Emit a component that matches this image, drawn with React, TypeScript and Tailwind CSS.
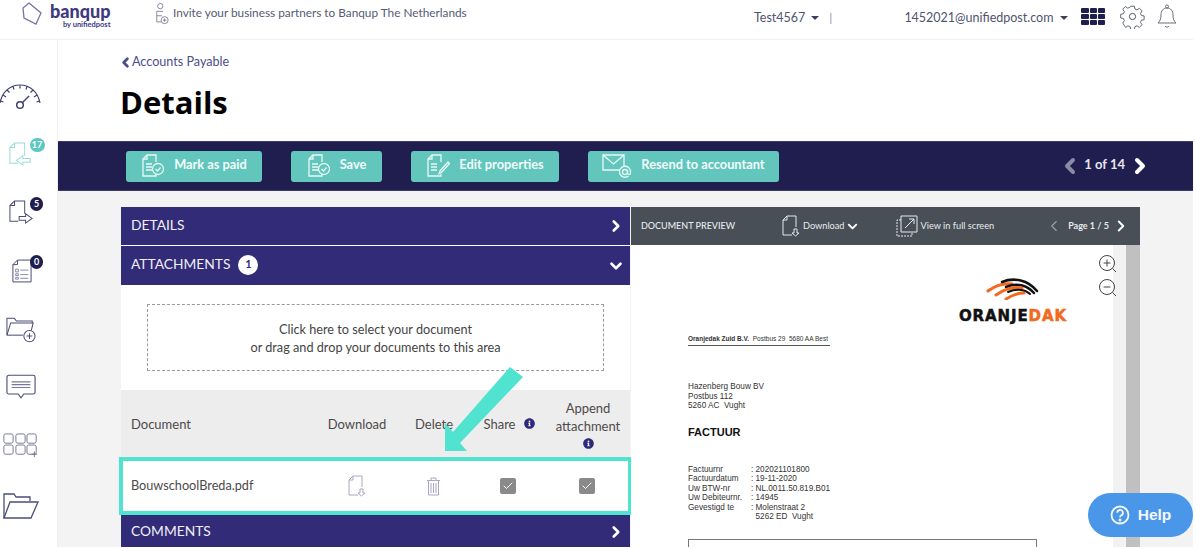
import React from 'react';
import { ChevronDown, ChevronLeft, ChevronRight, Check } from 'lucide-react';
import { FaInfoCircle } from 'react-icons/fa';

const navy = '#4b4d78';

const Gauge = () => (
  <svg width="42" height="28" viewBox="0 0 42 28" fill="none" stroke="#3f4270" strokeWidth="1.2">
    <path d="M1 21C3 10 11 3 21 3s18 7 20 18" />
    <path d="M1.5 19l3 1M4 13l3 2M8 8l2.5 2.500M14 4.500l1 3M21 3.500v3M28 4.500l-1 3M34 8l-2.500 2.500M38 13l-3 2M40.500 19l-3 1" />
    <circle cx="21" cy="23" r="3.300" strokeWidth="1.500" />
    <path d="M23 21l7-7" strokeWidth="1.500" />
  </svg>
);

const DocArrow = ({ color, out }: { color: string; out?: boolean }) => (
  <svg width="24" height="26" viewBox="0 0 26 26" fill="none" stroke={color} strokeWidth="1.1">
    <path d="M17 15V1H6L1 6v17h9" />
    <path d="M6 1v5H1" />
    {out ? (
      <path d="M11 18h7v-3l7 5-7 5v-3h-7z" />
    ) : (
      <path d="M23 18h-8v-3l-7 5 7 5v-3h8z" />
    )}
  </svg>
);

const ListDoc = () => (
  <svg width="20" height="24" viewBox="0 0 22 26" fill="none" stroke={navy} strokeWidth="1.100">
    <path d="M21 25H1V6l5-5h15z" />
    <path d="M6 1v5H1" />
    <path d="M4 11h3v3H4zM4 16h3v2H4zM4 20h3v2H4zM9 12h9M9 17h9M9 21h9" stroke="#8b8ca8" />
  </svg>
);

const FolderPlus = () => (
  <svg width="30" height="26" viewBox="0 0 32 27" fill="none" stroke={navy} strokeWidth="1.100">
    <path d="M1 19V1h8l2 3h17v2" />
    <path d="M1 19L5 6h24l-2 8" />
    <path d="M1 19h17" />
    <circle cx="25" cy="20" r="6" />
    <path d="M25 17v6M22 20h6" />
  </svg>
);

const Speech = () => (
  <svg width="30" height="25" viewBox="0 0 32 26" fill="none" stroke={navy} strokeWidth="1.200">
    <path d="M3 1h26a2 2 0 0 1 2 2v16a2 2 0 0 1-2 2H19l-3 4-3-4H3a2 2 0 0 1-2-2V3a2 2 0 0 1 2-2z" />
    <path d="M6 8h20M6 11h20M6 14h20" stroke="#77789a" />
  </svg>
);

const AppsPlus = () => (
  <svg width="37" height="24" viewBox="0 0 38 26" fill="none" stroke="#6f7090" strokeWidth="1">
    {[1, 14, 26].map((x) =>
      [1, 13].map((y) => <rect key={`${x}-${y}`} x={x} y={y} width="10" height="10" rx="2" />)
    )}
    <path d="M34 20v6M31 23h6" />
  </svg>
);

const Folder = () => (
  <svg width="36" height="26" viewBox="0 0 36 26" fill="none" stroke={navy} strokeWidth="1.300">
    <path d="M1 25V1h10l2 3h14v4" />
    <path d="M1 25L7 9h28l-7 16z" />
  </svg>
);

const PageDown = ({ color, w = 18, h = 22 }: { color: string; w?: number; h?: number }) => (
  <svg width={w} height={h} viewBox="0 0 18 22" fill="none" stroke={color} strokeWidth="1">
    <path d="M14 12V1H5L1 5v15h9" />
    <path d="M5 1v4H1" />
    <path d="M12 14v4h-2l3.500 3 3.500-3h-2v-4z" />
  </svg>
);

const Trash = () => (
  <svg width="15" height="19" viewBox="0 0 15 19" fill="none" stroke="#a9a6c6" strokeWidth="1">
    <path d="M1 3.500h13M5 3.500V1h5v2.500M2.500 3.500V18h10V3.500M5 6v10M7.500 6v10M10 6v10" />
  </svg>
);

const DocCheck = ({ pen }: { pen?: boolean }) => (
  <svg width="24" height="24" viewBox="0 0 24 24" fill="none" stroke="#eaf8f6" strokeWidth="1.300">
    <path d="M15 8V1H6L2 5v17h13v-2" />
    <path d="M6 1v4H2M5 10h6M5 13h6M5 16h6" />
    {pen ? (
      <path d="M14 17l8-9 1.500 1.500-8 9-2.500 1z" />
    ) : (
      <>
        <circle cx="17" cy="15" r="5.500" />
        <path d="M14.500 15l2 2 3-3.500" />
      </>
    )}
  </svg>
);

const MailAt = () => (
  <svg width="30" height="24" viewBox="0 0 30 24" fill="none" stroke="#eaf8f6" strokeWidth="1.300">
    <path d="M17 16H1V1h21v11" />
    <path d="M1 1l10.500 9L22 1" />
    <circle cx="23" cy="18" r="2.500" />
    <path d="M25.500 16v3a1.500 1.500 0 0 0 3 0v-1a5.500 5.500 0 1 0-2 4" />
  </svg>
);

const Gear = () => (
  <svg width="25" height="25" viewBox="0 0 24 24" fill="none" stroke="#4a4f5c" strokeWidth="0.900">
    <path d="M10 1h4l.6 3 2.200.9 2.600-1.700 2.800 2.800-1.700 2.600.9 2.200 3 .6v4l-3 .6-.9 2.200 1.700 2.600-2.800 2.800-2.600-1.700-2.200.9-.6 3h-4l-.6-3-2.200-.9-2.600 1.700L1.600 19l1.700-2.600-.9-2.200-3-.6v-4l3-.6.900-2.200L1.600 4.200 4.400 1.400 7 3.100l2.200-.9z" transform="translate(1.200 1.200) scale(.9)" />
    <circle cx="12" cy="12" r="3" />
  </svg>
);

const Bell = () => (
  <svg width="20" height="25" viewBox="0 0 20 25" fill="none" stroke="#5a5f6a" strokeWidth="0.900">
    <path d="M1 19c2-2 3-4 3-8s2-7 6-7 6 3 6 7 1 6 3 8z" />
    <circle cx="10" cy="2.500" r="1.500" />
    <path d="M8 22c1 1.500 3 1.500 4 0" />
  </svg>
);

const Badge = ({ value, teal }: { value: string; teal?: boolean }) => (
  <span className={`absolute flex items-center justify-center rounded-full text-[9px] font-bold text-white h-[14px] left-[31px] ${teal ? 'w-[15px] bg-[#5cc8bf] -top-[2px]' : 'w-[13px] bg-[#201d4f] -top-[1px]'}`}>
    {value}
  </span>
);

const ActionButton = ({ icon, label, width }: { icon: React.ReactNode; label: string; width: string }) => (
  <button className={`flex items-center justify-center gap-[9px] h-[31px] rounded-[3px] bg-[#62c6bd] text-[12.800px] font-bold text-[#f2fbfa] ${width}`}>
    {icon}
    <span className="mb-[2px]">{label}</span>
  </button>
);

const PanelBar = ({ children, open, height }: { children: React.ReactNode; open?: boolean; height: string }) => (
  <div className={`flex items-center justify-between pl-[10px] pr-[5px] bg-[#322b77] text-[13.800px] text-[#f0eff8] ${height}`}>
    <div className="flex items-center gap-[8px] pb-[2px]">{children}</div>
    {open ? <ChevronDown size={18} strokeWidth={3.500} color="#fff" /> : <ChevronRight size={18} strokeWidth={3.500} color="#fff" />}
  </div>
);

const Tick = () => (
  <span className="flex items-center justify-center w-[16px] h-[16px] rounded-[2px] bg-[#8a8a8a]">
    <Check size={12} strokeWidth={2} color="#fff" />
  </span>
);

export default function App() {
  return (
    <div className="relative w-[1196px] h-[549px] overflow-hidden bg-white font-['Lato','Liberation_Sans',sans-serif]">
      <div className="w-[1193px] h-[547px] flex flex-col">
        {/* top bar */}
        <header className="flex items-center h-[40px] shrink-0 border-b border-[#f0f0f0] text-[#565a76]">
          <div className="flex items-start self-start shrink-0 ml-[22px] w-[89px] pt-[2px]">
            <svg width="20" height="24" viewBox="0 0 20 24" fill="none" stroke="#7773ab" strokeWidth="1.300" className="mr-[8px]">
              <path d="M7 1l12 10-5 11L2 16 1 6z" />
            </svg>
            <div className="flex flex-col items-end shrink-0">
              <span className="text-[18px] leading-[19px] font-black text-[#3d3a80]">banqup</span>
              <span className="text-[7.500px] leading-[8px] font-bold text-[#3d3a80] whitespace-nowrap">by unifiedpost</span>
            </div>
          </div>
          <svg width="14" height="24" viewBox="0 0 16 26" fill="none" stroke="#6b6f85" strokeWidth="0.900" className="ml-[44px] mr-[4px] mb-[11px] shrink-0">
            <circle cx="6" cy="4" r="3" />
            <path d="M9 10H2v12h5M2 15h6" />
            <circle cx="11" cy="20" r="4" />
            <path d="M11 18v4M9 20h4" />
          </svg>
          <span className="w-[291px] shrink-0 whitespace-nowrap text-[11.800px] mb-[13px]">Invite your business partners to Banqup The Netherlands</span>
          <span className="ml-[290px] mb-[3px] text-[12.500px] text-[#50546e] whitespace-nowrap">Test4567</span>
          <span className="ml-[6px] mb-[3px] border-x-[4px] border-t-[4px] border-x-transparent border-t-[#3c3f5c]" />
          <span className="ml-[10px] mb-[3px] text-[12px] text-[#8a8fa0]">|</span>
          <span className="ml-[72px] mb-[3px] text-[12.500px] text-[#50546e] whitespace-nowrap">1452021@unifiedpost.com</span>
          <span className="ml-[7px] mb-[3px] border-x-[4px] border-t-[4px] border-x-transparent border-t-[#3c3f5c]" />
          <div className="ml-[13px] mb-[6px] grid grid-cols-3 gap-[1px] w-[24px] shrink-0">
            {Array.from({ length: 9 }).map((_, i) => (
              <span key={i} className="h-[5px] rounded-[1px] bg-[#201d4f]" />
            ))}
          </div>
          <span className="ml-[15px] mb-[6px] flex shrink-0"><Gear /></span>
          <span className="ml-[12px] mb-[6px] flex shrink-0"><Bell /></span>
        </header>

        <div className="flex flex-1 min-h-0">
          {/* sidebar */}
          <aside className="w-[58px] shrink-0 border-r border-[#f0f0f0] flex flex-col items-center pt-[27px]">
            <div className="h-[58px] flex items-center justify-center -ml-[17px] w-[42px]"><Gauge /></div>
            <div className="relative h-[58px] w-[44px] flex items-center justify-center -ml-[16px]"><DocArrow color="#9bdcd6" /><span className="absolute left-0 top-[15px]"><Badge value="17" teal /></span></div>
            <div className="relative h-[58px] w-[44px] flex items-center justify-center -ml-[15px]"><DocArrow color={navy} out /><span className="absolute left-0 top-[15px]"><Badge value="5" /></span></div>
            <div className="relative h-[60px] w-[44px] flex items-center justify-center -ml-[13px]"><ListDoc /><span className="absolute -left-[1px] top-[15px]"><Badge value="0" /></span></div>
            <div className="h-[58px] flex items-center justify-center w-[44px] -ml-[15px]"><FolderPlus /></div>
            <div className="h-[55px] flex items-center justify-center w-[44px] -ml-[15px]"><Speech /></div>
            <div className="h-[62px] flex items-center justify-center w-[44px] -ml-[16px]"><AppsPlus /></div>
            <div className="h-[59px] flex items-center justify-center w-[44px] -ml-[15px]"><Folder /></div>
          </aside>

          <main className="flex-1 min-w-0 flex flex-col">
            <div className="h-[101px] shrink-0 pl-[62px] pt-[14px]">
              <div className="flex items-center text-[12.600px] leading-[16px] text-[#4d4c8c]">
                <ChevronLeft size={15} strokeWidth={4.500} className="-ml-[2px] -mr-[1px]" />
                Accounts Payable
              </div>
              <h1 className="mt-[13px] text-[31px] leading-[38px] font-bold text-black font-['Open_Sans',sans-serif]">Details</h1>
            </div>

            <div className="h-[50px] shrink-0 flex items-center pl-[68px] pr-[41px] bg-[#201d4f] border-y border-[#3d3a6c]">
              <div className="flex items-center gap-[29px]">
                <ActionButton icon={<DocCheck />} label="Mark as paid" width="w-[136px]" />
                <ActionButton icon={<DocCheck />} label="Save" width="w-[91px]" />
                <ActionButton icon={<DocCheck pen />} label="Edit properties" width="w-[148px]" />
                <ActionButton icon={<MailAt />} label="Resend to accountant" width="w-[191px]" />
              </div>
              <div className="ml-auto flex items-center text-[13px] font-bold text-[#e6e6ef]">
                <ChevronLeft size={24} strokeWidth={4} color="#8b8aa5" className="mr-[2px]" />
                <span className="mb-[2px]">1 of 14</span>
                <ChevronRight size={24} strokeWidth={4} color="#fff" className="ml-[3px]" />
              </div>
            </div>

            <div className="flex-1 min-h-0 overflow-hidden bg-[#f3f3f3] flex items-start pl-[63px] pt-[16px]">
              {/* left panel */}
              <section className="w-[509px] shrink-0 bg-white">
                <PanelBar height="h-[38px] mb-[1px]">DETAILS</PanelBar>
                <PanelBar height="h-[39px]" open>
                  ATTACHMENTS
                  <span className="flex items-center justify-center w-[20px] h-[20px] rounded-full bg-white text-[11px] font-bold text-[#322b77]">1</span>
                </PanelBar>
                <div className="h-[105px] pt-[19px] pl-[26px]">
                  <div className="w-[457px] h-[67px] border border-dashed border-[#9a9a9a] flex flex-col items-center justify-center text-[12.700px] leading-[18px] text-[#444]">
                    <span>Click here to select your document</span>
                    <span>or drag and drop your documents to this area</span>
                  </div>
                </div>
                <div className="h-[67px] flex items-center bg-[#ededed] text-[13px] leading-[18px] text-[#4d4a4a]">
                  <div className="w-[197px] pl-[10px]">Document</div>
                  <div className="w-[78px] text-center">Download</div>
                  <div className="w-[76px] text-center">Delete</div>
                  <div className="w-[74px] flex items-center justify-center gap-[8px]">Share <FaInfoCircle size={11} color="#2d2a7c" /></div>
                  <div className="w-[84px] flex flex-col items-center">
                    <span>Append</span>
                    <span>attachment</span>
                    <FaInfoCircle size={11} color="#2d2a7c" className="mt-[3px]" />
                  </div>
                </div>
                <div className="-mx-[2px] w-[513px] h-[58px] flex items-center border-[4px] border-[#4fe3d0] bg-white text-[12.700px] text-[#4d4a4a]">
                  <div className="w-[196px] pl-[8px]">BouwschoolBreda.pdf</div>
                  <div className="w-[78px] flex justify-center"><PageDown color="#a8a6c2" /></div>
                  <div className="w-[76px] flex justify-center"><Trash /></div>
                  <div className="w-[74px] flex justify-center"><Tick /></div>
                  <div className="w-[83px] flex justify-center"><Tick /></div>
                </div>
                <PanelBar height="h-[34px]">COMMENTS</PanelBar>
              </section>

              {/* document preview */}
              <section className="w-[509px] shrink-0 ml-[1px] bg-[#f2f2f2]">
                <div className="h-[38px] flex items-center pl-[10px] bg-[#484f57] text-[#e8eaec]">
                  <span className="w-[141px] text-[9px] font-medium">DOCUMENT PREVIEW</span>
                  <PageDown color="#e8eaec" />
                  <span className="ml-[3px] text-[9.200px]">Download</span>
                  <ChevronDown size={15} strokeWidth={3} color="#fff" />
                  <svg width="22" height="22" viewBox="0 0 22 22" fill="none" stroke="#e8eaec" strokeWidth="1" className="ml-[36px]">
                    <path d="M5 1h16v16H5zM9 13L18 4M13 4h5v5" />
                    <path d="M5 5H1v16h15v-4" strokeDasharray="2 1" />
                  </svg>
                  <span className="ml-[3px] text-[9.200px]">View in full screen</span>
                  <ChevronLeft size={18} strokeWidth={1.500} color="#9aa0a6" className="ml-[51px]" />
                  <span className="ml-[5px] text-[9px] font-bold">Page 1 / 5</span>
                  <ChevronRight size={18} strokeWidth={2.500} color="#fff" className="ml-[3px]" />
                </div>
                <div className="relative flex h-[302px]">
                  <div className="w-[482px] bg-white pl-[57px] text-[#333] font-['Liberation_Sans',sans-serif] text-[8.200px] leading-[9.500px]">
                    <div className="flex justify-end pr-[46px] pt-[33px]">
                      <div className="flex flex-col items-center">
                        <svg width="54" height="22" viewBox="0 0 54 22" fill="none" strokeLinecap="round">
                          <path d="M2 13C10 7 18 5 26 6" stroke="#f26a1b" strokeWidth="3" />
                          <path d="M16 4C28-1 42 2 51 13" stroke="#111" strokeWidth="2.500" />
                          <path d="M20 9C32 4 42 8 48 15" stroke="#111" strokeWidth="2.500" />
                          <path d="M10 17C20 10 30 9 36 10" stroke="#f26a1b" strokeWidth="3" />
                          <path d="M22 14C32 10 40 12 44 16" stroke="#111" strokeWidth="2" />
                          <path d="M20 21C26 17 32 15 38 15" stroke="#f26a1b" strokeWidth="3" />
                        </svg>
                        <span className="mt-[8px] text-[15px] leading-[16px] font-bold tracking-[0.900px] whitespace-nowrap font-['DejaVu_Sans',sans-serif] text-[#111] [-webkit-text-stroke:0.5px_#111]">
                          ORANJE<span className="text-[#f26a1b] [-webkit-text-stroke:0.5px_#f26a1b]">DAK</span>
                        </span>
                      </div>
                    </div>
                    <div className="mt-[11px] w-[142px] border-b border-[#555] pb-[2px] text-[6.500px] leading-[8px] whitespace-nowrap">
                      <b>Oranjedak Zuid B.V.</b>&nbsp; Postbus 29&nbsp; 5680 AA Best
                    </div>
                    <div className="mt-[36px]">
                      <div>Hazenberg Bouw BV</div>
                      <div>Postbus 112</div>
                      <div>5260 AC&nbsp; Vught</div>
                    </div>
                    <div className="mt-[14px] text-[11px] leading-[14px] font-bold text-[#111]">FACTUUR</div>
                    <div className="mt-[26px] grid grid-cols-[63px_1fr]">
                      <span>Factuurnr</span><span>: 202021101800</span>
                      <span>Factuurdatum</span><span>: 19-11-2020</span>
                      <span>Uw BTW-nr</span><span>: NL.0011.50.819.B01</span>
                      <span>Uw Debiteurnr.</span><span>: 14945</span>
                      <span>Gevestigd te</span><span>: Molenstraat 2</span>
                      <span /><span>&nbsp; 5262 ED&nbsp; Vught</span>
                    </div>
                    <div className="mt-[17px] w-[349px] h-[40px] border border-[#777]" />
                  </div>
                  <div className="flex-1 pl-[13px]">
                    <div className="w-[14px] h-full bg-[#c0c0c0]" />
                  </div>
                  <svg width="20" height="50" viewBox="0 0 20 50" fill="none" stroke="#444" strokeWidth="1" className="absolute left-[467px] top-[9px]">
                    <circle cx="9" cy="9" r="7.500" />
                    <path d="M5.500 9h7M9 5.500v7M14.500 14.500l3.500 3.500" />
                    <circle cx="9" cy="33" r="7.500" />
                    <path d="M5.500 33h7M14.500 38.500l3.500 3.500" />
                  </svg>
                </div>
              </section>
            </div>
          </main>
        </div>
      </div>

      {/* callout arrow over the table */}
      <svg width="90" height="95" viewBox="0 0 90 95" className="absolute left-[440px] top-[362px]">
        <polygon points="70,5 83,15 20,81 27,89 5,89 5,61 13,70" fill="#4fe3d0" />
      </svg>

      <button className="absolute left-[1088px] top-[493px] w-[105px] h-[44px] rounded-full bg-[#4a96e8] flex items-center justify-center gap-[8px] text-[15.500px] font-bold text-[#f4f8fd] font-['Liberation_Sans',sans-serif]">
        <svg width="20" height="20" viewBox="0 0 20 20" fill="none" stroke="#f4f8fd" strokeWidth="1.800">
          <circle cx="10" cy="10" r="8.500" />
          <path d="M7.300 7.800a2.800 2.800 0 1 1 4 2.500c-.9.500-1.300 1-1.300 2" />
          <circle cx="10" cy="15" r=".6" fill="#f4f8fd" />
        </svg>
        Help
      </button>
    </div>
  );
}
